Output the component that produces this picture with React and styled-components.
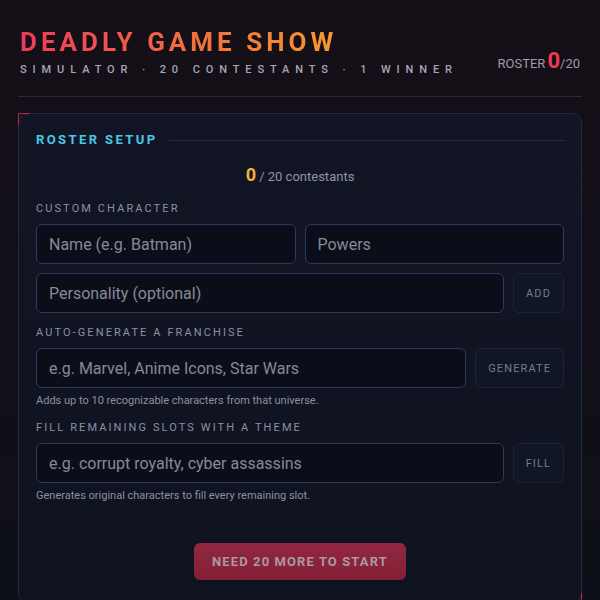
import styled, { createGlobalStyle } from 'styled-components'

const GlobalStyle = createGlobalStyle`
    html, body {
        margin: 0;
        padding: 0;
        background: #120e15;
    }
    body {
        font-family: Roboto, "Liberation Sans", sans-serif;
        -webkit-font-smoothing: antialiased;
    }
`

const App = () => {
    return (
        <>
            <GlobalStyle />
            <Page>
                <Header>
                    <TitleBlock>
                        <Title>DEADLY GAME SHOW</Title>
                        <Subtitle>SIMULATOR · 20 CONTESTANTS · 1 WINNER</Subtitle>
                    </TitleBlock>
                    <RosterCount>
                        ROSTER<Big>0</Big>/20
                    </RosterCount>
                </Header>

                <Panel>
                    <PanelHead>
                        <PanelTitle>ROSTER SETUP</PanelTitle>
                        <PanelRule />
                    </PanelHead>

                    <Count>
                        <CountNum>0</CountNum> / 20 contestants
                    </Count>

                    <Section>
                        <Label>CUSTOM CHARACTER</Label>
                        <Row>
                            <Input placeholder="Name (e.g. Batman)" />
                            <Input placeholder="Powers" />
                        </Row>
                        <Row>
                            <Input placeholder="Personality (optional)" />
                            <SmallBtn>ADD</SmallBtn>
                        </Row>
                    </Section>

                    <Section>
                        <Label>AUTO-GENERATE A FRANCHISE</Label>
                        <Row>
                            <Input placeholder="e.g. Marvel, Anime Icons, Star Wars" />
                            <SmallBtn>GENERATE</SmallBtn>
                        </Row>
                        <Hint>Adds up to 10 recognizable characters from that universe.</Hint>
                    </Section>

                    <Section>
                        <Label>FILL REMAINING SLOTS WITH A THEME</Label>
                        <Row>
                            <Input placeholder="e.g. corrupt royalty, cyber assassins" />
                            <SmallBtn>FILL</SmallBtn>
                        </Row>
                        <Hint>Generates original characters to fill every remaining slot.</Hint>
                    </Section>

                    <Footer>
                        <StartBtn disabled>NEED 20 MORE TO START</StartBtn>
                    </Footer>
                </Panel>
            </Page>
        </>
    )
}

const Page = styled.div`
    width: 600px;
    height: 600px;
    overflow: hidden;
    box-sizing: border-box;
    padding: 27px 18px 0;
    background: linear-gradient(180deg, #150f17 0%, #120f18 55%, #0d1018 100%);
`
const Header = styled.div`
    display: flex;
    justify-content: space-between;
    align-items: flex-end;
    padding: 0 2px 19px;
    border-bottom: 1px solid #262b40;
`
const TitleBlock = styled.div`
    display: flex;
    flex-direction: column;
`
const Title = styled.h1`
    margin: 0;
    font-size: 26px;
    line-height: 31px;
    font-weight: 700;
    letter-spacing: 4px;
    background: linear-gradient(90deg, #ee3a5a 0%, #f26a40 50%, #f59a2c 100%);
    -webkit-background-clip: text;
    background-clip: text;
    color: transparent;
    width: max-content;
`
const Subtitle = styled.div`
    margin-top: 5px;
    font-size: 11px;
    line-height: 14px;
    font-weight: 500;
    letter-spacing: 5.9px;
    color: #a4a6b6;
`
const RosterCount = styled.div`
    font-size: 13px;
    color: #9a9cac;
    line-height: 22px;
    margin-bottom: 2px;
`
const Big = styled.span`
    font-size: 22px;
    font-weight: 700;
    color: #f03a55;
    margin-left: 2px;
`
const Panel = styled.div`
    position: relative;
    display: flex;
    flex-direction: column;
    margin-top: 16px;
    padding: 18px 17px 22px;
    border: 1px solid #23293f;
    border-radius: 10px;
    background: linear-gradient(180deg, #121624 0%, #0f1320 100%);

    /* red corner ticks */
    &::before,
    &::after {
        content: '';
        position: absolute;
        width: 11px;
        height: 11px;
        border-color: rgba(230, 50, 90, 0.75);
        border-style: solid;
    }
    &::before {
        top: -1px;
        left: -1px;
        border-width: 1px 0 0 1px;
    }
    &::after {
        bottom: -3px;
        right: -1px;
        border-width: 0 1px 1px 0;
    }
`
const PanelHead = styled.div`
    display: flex;
    align-items: center;
    gap: 12px;
`
const PanelTitle = styled.h2`
    margin: 0;
    font-size: 13px;
    line-height: 16px;
    font-weight: 700;
    letter-spacing: 2.4px;
    color: #4cc6e6;
`
const PanelRule = styled.div`
    flex: 1;
    height: 1px;
    background: #262d48;
`
const Count = styled.div`
    margin: 16px 0 4px;
    text-align: center;
    font-size: 13px;
    color: #8e94a8;
`
const CountNum = styled.span`
    font-size: 18px;
    font-weight: 700;
    color: #f2b134;
`
const Section = styled.div`
    display: flex;
    flex-direction: column;
    gap: 9px;
    margin-top: 13px;
`
const Label = styled.div`
    font-size: 11px;
    line-height: 14px;
    font-weight: 400;
    letter-spacing: 2.1px;
    color: #8a90a6;
    margin-bottom: -1px;
`
const Row = styled.div`
    display: flex;
    gap: 9px;
`
const Input = styled.input`
    flex: 1;
    min-width: 0;
    height: 40px;
    box-sizing: border-box;
    padding: 0 12px;
    border: 1px solid #2b3a5e;
    border-radius: 6px;
    background: #0b0e18;
    font-family: Roboto, "Liberation Sans", sans-serif;
    font-size: 16px;
    color: #d0d4de;
    outline: none;

    &::placeholder {
        color: #858a98;
    }
`
const SmallBtn = styled.button`
    flex: none;
    height: 40px;
    padding: 0 12px;
    min-width: 51px;
    border: 1px solid #1c2339;
    border-radius: 6px;
    background: #111626;
    font-family: Roboto, "Liberation Sans", sans-serif;
    font-size: 11px;
    font-weight: 400;
    letter-spacing: 1.1px;
    color: #737b90;
    cursor: pointer;
`
const Hint = styled.div`
    margin-top: -3px;
    font-size: 11px;
    line-height: 14px;
    color: #8a90a2;
`
const Footer = styled.div`
    display: flex;
    justify-content: center;
    margin-top: 40px;
`
const StartBtn = styled.button`
    width: 212px;
    height: 37px;
    border: none;
    border-radius: 6px;
    background: linear-gradient(180deg, #922640 0%, #832036 100%);
    font-family: Roboto, "Liberation Sans", sans-serif;
    font-size: 13px;
    font-weight: 700;
    letter-spacing: 1.1px;
    color: #ab98a2;
    cursor: not-allowed;
`

export default App
